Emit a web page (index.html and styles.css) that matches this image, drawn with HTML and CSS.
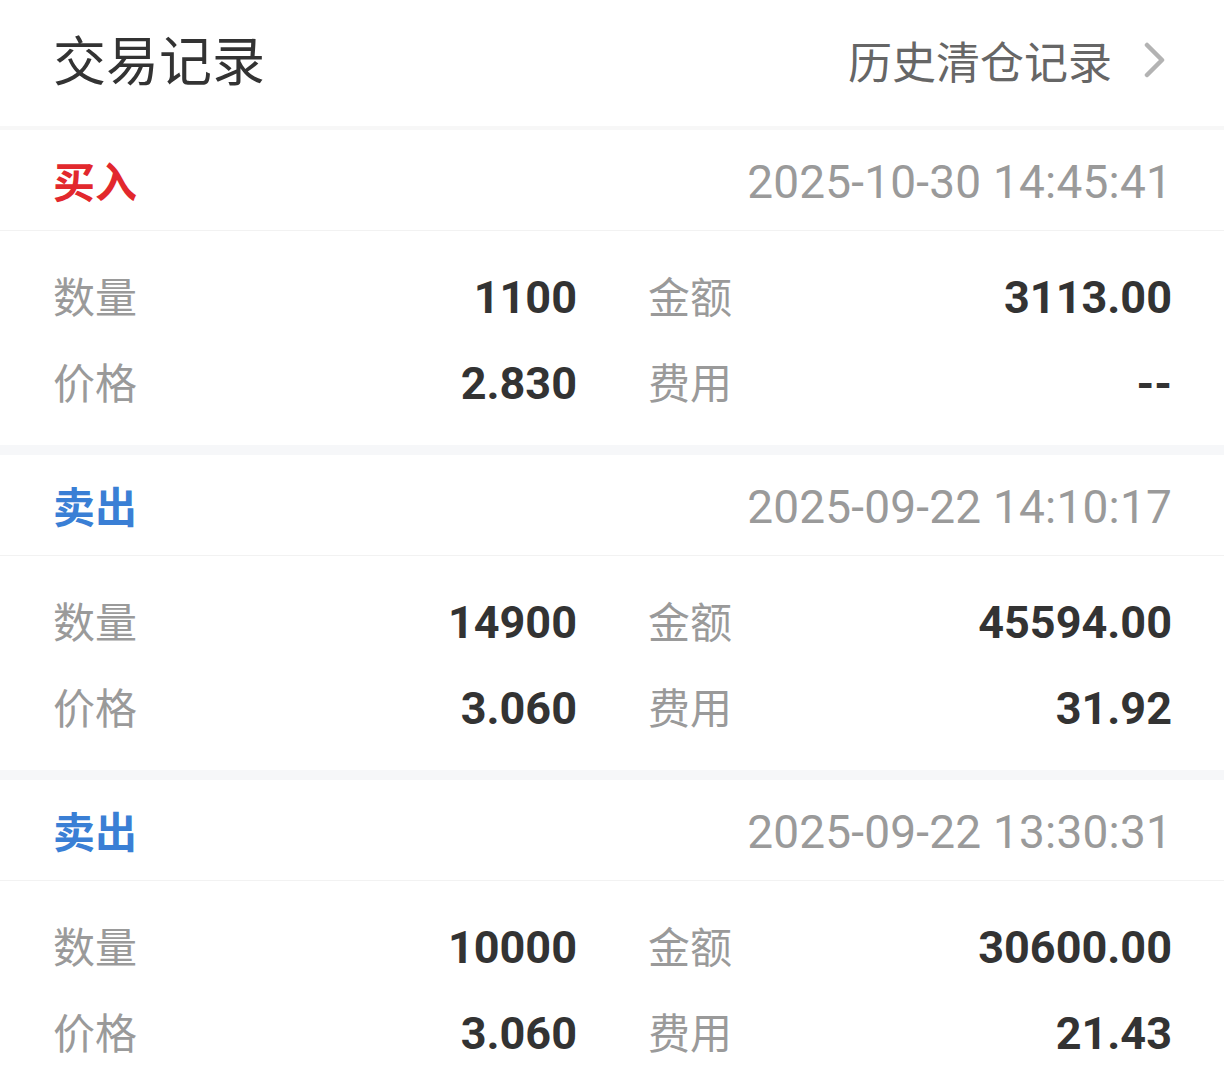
FILE: index.html
```html
<!DOCTYPE html>
<html lang="zh-CN">
<head>
<meta charset="utf-8">
<title>交易记录</title>
<link rel="stylesheet" href="styles.css">
</head>
<body>
<div class="page">
  <header class="topbar">
    <h1 class="title">交易记录</h1>
    <a class="history">历史清仓记录<svg class="chev" width="22" height="36" viewBox="0 0 22 36"><path d="M3 3 L18 18 L3 33" fill="none" stroke="#b3b3b3" stroke-width="4.5" stroke-linecap="round" stroke-linejoin="round"/></svg></a>
  </header>

  <section class="card">
    <div class="card-head">
      <span class="side buy">买入</span>
      <span class="time">2025-10-30 14:45:41</span>
    </div>
    <div class="card-body">
      <div class="cell"><span class="label">数量</span><span class="value">1100</span></div>
      <div class="cell"><span class="label">金额</span><span class="value">3113.00</span></div>
      <div class="cell"><span class="label">价格</span><span class="value">2.830</span></div>
      <div class="cell"><span class="label">费用</span><span class="value">--</span></div>
    </div>
  </section>

  <section class="card">
    <div class="card-head">
      <span class="side sell">卖出</span>
      <span class="time">2025-09-22 14:10:17</span>
    </div>
    <div class="card-body">
      <div class="cell"><span class="label">数量</span><span class="value">14900</span></div>
      <div class="cell"><span class="label">金额</span><span class="value">45594.00</span></div>
      <div class="cell"><span class="label">价格</span><span class="value">3.060</span></div>
      <div class="cell"><span class="label">费用</span><span class="value">31.92</span></div>
    </div>
  </section>

  <section class="card">
    <div class="card-head">
      <span class="side sell">卖出</span>
      <span class="time">2025-09-22 13:30:31</span>
    </div>
    <div class="card-body">
      <div class="cell"><span class="label">数量</span><span class="value">10000</span></div>
      <div class="cell"><span class="label">金额</span><span class="value">30600.00</span></div>
      <div class="cell"><span class="label">价格</span><span class="value">3.060</span></div>
      <div class="cell"><span class="label">费用</span><span class="value">21.43</span></div>
    </div>
  </section>
</div>
</body>
</html>
```

FILE: styles.css
```css
html, body {
  margin: 0;
  padding: 0;
  background: #ffffff;
}
body {
  font-family: Roboto, "Noto Sans CJK SC", "Noto Sans", sans-serif;
  color: #333333;
  overflow: hidden;
}
.page {
  width: 1224px;
}
.topbar {
  height: 130px;
  box-sizing: border-box;
  padding: 0 58px 0 53px;
  display: flex;
  align-items: center;
  justify-content: space-between;
  border-bottom: 4px solid #f7f7f7;
}
.title {
  margin: 0;
  font-family: "Noto Sans CJK SC", sans-serif;
  font-weight: 400;
  font-size: 53px;
  line-height: 1;
  color: #333333;
  position: relative;
  top: -5px;
}
.history {
  display: flex;
  align-items: center;
  font-family: "Noto Sans CJK SC", sans-serif;
  font-size: 44px;
  color: #666666;
  gap: 32px;
  position: relative;
  top: -3px;
}
.chev {
  display: block;
}
.card {
  border-bottom: 10px solid #f6f7f9;
}
.card-head {
  height: 101px;
  box-sizing: border-box;
  padding: 4px 52px 0 53px;
  display: flex;
  align-items: center;
  justify-content: space-between;
  border-bottom: 1px solid #f2f2f2;
}
.side {
  font-family: "Noto Sans CJK SC", sans-serif;
  font-weight: 700;
  font-size: 42px;
  line-height: 1;
  position: relative;
  top: -2px;
}
.buy { color: #e2282d; }
.sell { color: #3a7fd5; }
.time {
  font-family: Roboto, sans-serif;
  font-size: 46px;
  color: #9a9a9a;
  line-height: 1;
  letter-spacing: 0.2px;
}
.card-body {
  padding: 23px 52px 19px 53px;
  display: grid;
  grid-template-columns: 1fr 1fr;
  column-gap: 71px;
}
.cell {
  height: 86px;
  display: flex;
  align-items: center;
  justify-content: space-between;
}
.label {
  font-family: "Noto Sans CJK SC", sans-serif;
  font-size: 42px;
  color: #9a9a9a;
  line-height: 1;
  position: relative;
  top: -2px;
}
.value {
  font-family: Roboto, sans-serif;
  font-weight: 700;
  font-size: 45px;
  color: #333333;
  line-height: 1;
}
```
